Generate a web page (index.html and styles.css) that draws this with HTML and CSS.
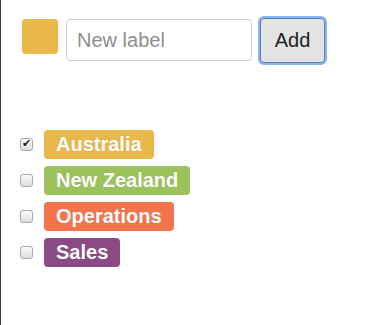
FILE: index.html
```html
<!DOCTYPE html>
<html lang="en">
<head>
  <meta charset="UTF-8">
  <meta name="viewport" content="width=device-width, initial-scale=1.0">
  <title>Labels</title>
  <link rel="stylesheet" href="styles.css">
</head>
<body>
  <div class="page">
    <div class="toolbar">
      <div class="swatch"></div>
      <input type="text" class="label-input" placeholder="New label">
      <button class="add-button">Add</button>
    </div>

    <ul class="label-list">
      <li class="label-row">
        <input type="checkbox" checked>
        <span class="tag tag-australia">Australia</span>
      </li>
      <li class="label-row">
        <input type="checkbox">
        <span class="tag tag-nz">New Zealand</span>
      </li>
      <li class="label-row">
        <input type="checkbox">
        <span class="tag tag-operations">Operations</span>
      </li>
      <li class="label-row">
        <input type="checkbox">
        <span class="tag tag-sales">Sales</span>
      </li>
    </ul>
  </div>
</body>
</html>
```

FILE: styles.css
```css
html, body {
  height: 100%;
}
body {
  margin: 0;
  font-family: 'Liberation Sans', Arial, sans-serif;
  background-color: #fff;
  color: #222;
}
.page {
  min-height: 100%;
  border-left: 1px solid #3c3c3c;
  box-sizing: border-box;
}
.toolbar {
  display: flex;
  align-items: flex-start;
  padding: 19px 0 0 21px;
}
.swatch {
  width: 36px;
  height: 35px;
  border-radius: 4px;
  background-color: #e8b84b;
  margin-right: 8px;
}
.label-input {
  width: 186px;
  height: 42px;
  box-sizing: border-box;
  margin: 0;
  padding: 0 10px;
  border: 1px solid #ccc;
  border-radius: 4px;
  font-family: inherit;
  font-size: 20px;
  color: #333;
  outline: none;
}
.label-input::placeholder {
  color: #8e8e8e;
}
.add-button {
  width: 65px;
  height: 45px;
  margin: -1px 0 0 8px;
  padding: 0;
  border: 1px solid #5f7ea8;
  border-radius: 4px;
  background-color: #e3e3e3;
  box-shadow: 0 0 0 2px #85b5f6;
  font-family: inherit;
  font-size: 20px;
  color: #222;
}
.label-list {
  list-style: none;
  margin: 0;
  padding: 67px 0 0 19px;
  display: flex;
  flex-direction: column;
  gap: 7px;
}
.label-row {
  display: flex;
  align-items: center;
}
.label-row input {
  appearance: none;
  -webkit-appearance: none;
  width: 13px;
  height: 13px;
  margin: 0 11px 0 0;
  border: 1px solid #a9a9a9;
  border-radius: 3px;
  background: linear-gradient(#fcfcfc, #dcdcdc);
  box-sizing: border-box;
  position: relative;
}
.label-row input:checked::after {
  content: '\2714';
  position: absolute;
  left: 1px;
  top: -2px;
  font-size: 11px;
  color: #222;
}
.tag {
  display: inline-block;
  height: 29px;
  line-height: 29px;
  padding: 0 12px;
  border-radius: 4px;
  font-size: 20px;
  font-weight: bold;
  color: #fff;
  text-shadow: 0 0 1px rgba(0, 0, 0, 0.15);
}
.tag-australia {
  background-color: #e8b84b;
}
.tag-nz {
  background-color: #9bc25b;
}
.tag-operations {
  background-color: #f5744c;
}
.tag-sales {
  background-color: #8c4a84;
}
```
